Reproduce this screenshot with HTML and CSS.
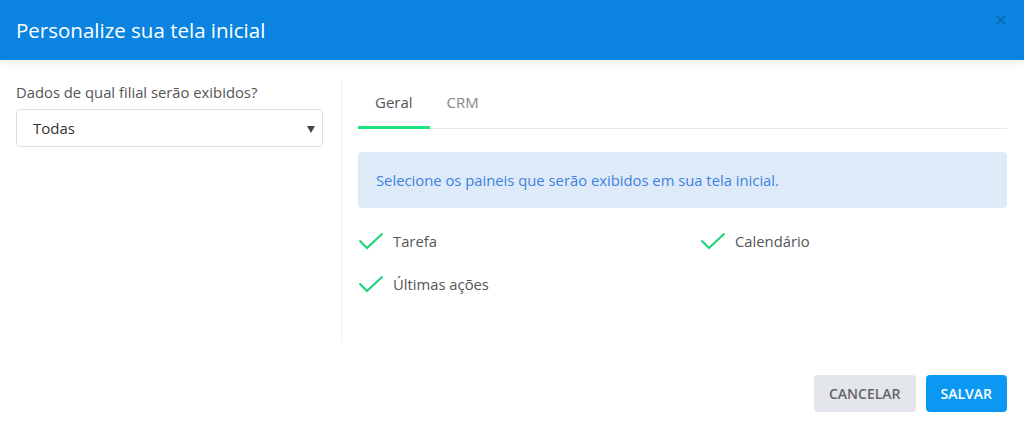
FILE: index.html
```html
<!DOCTYPE html>
<html lang="pt-BR">
<head>
    <meta charset="UTF-8">
    <meta name="viewport" content="width=device-width, initial-scale=1.0">
    <title>Personalize sua tela inicial</title>
    <link rel="stylesheet" href="styles.css">
</head>
<body>
    <div class="modal">
        <div class="modal-header">
            <h1>Personalize sua tela inicial</h1>
            <button class="close" aria-label="Fechar">
                <svg width="10" height="10" viewBox="0 0 10 10"><path d="M1 1L9 9M9 1L1 9" stroke="currentColor" stroke-width="1.6"/></svg>
            </button>
        </div>

        <div class="modal-body">
            <div class="col-left">
                <label for="filial">Dados de qual filial serão exibidos?</label>
                <div class="select">
                    <span>Todas</span>
                    <i class="caret"></i>
                </div>
            </div>

            <div class="col-right">
                <ul class="tabs">
                    <li class="tab active">Geral</li>
                    <li class="tab">CRM</li>
                </ul>

                <div class="info">Selecione os paineis que serão exibidos em sua tela inicial.</div>

                <div class="panels">
                    <div class="panel-item">
                        <svg class="check" width="26" height="18" viewBox="0 0 26 18"><path d="M1.5 8.5L9 16L24.5 1.5" fill="none" stroke="currentColor" stroke-width="2.2"/></svg>
                        <span>Tarefa</span>
                    </div>
                    <div class="panel-item">
                        <svg class="check" width="26" height="18" viewBox="0 0 26 18"><path d="M1.5 8.5L9 16L24.5 1.5" fill="none" stroke="currentColor" stroke-width="2.2"/></svg>
                        <span>Calendário</span>
                    </div>
                    <div class="panel-item">
                        <svg class="check" width="26" height="18" viewBox="0 0 26 18"><path d="M1.5 8.5L9 16L24.5 1.5" fill="none" stroke="currentColor" stroke-width="2.2"/></svg>
                        <span>Últimas ações</span>
                    </div>
                </div>
            </div>
        </div>

        <div class="modal-footer">
            <button class="btn btn-cancel">CANCELAR</button>
            <button class="btn btn-save">SALVAR</button>
        </div>
    </div>
</body>
</html>
```

FILE: styles.css
```css
body {
    font-family: 'Open Sans', sans-serif;
    background-color: #fff;
    margin: 0;
    color: #555;
}
.modal {
    width: 1024px;
    height: 429px;
    background-color: #fff;
}
.modal-header {
    height: 60px;
    background-color: #0a84e0;
    display: flex;
    align-items: center;
    justify-content: space-between;
    padding: 0 18px 0 16px;
    box-shadow: 0 3px 10px rgba(0, 0, 0, 0.08);
    position: relative;
}
.modal-header h1 {
    margin: 0 0 1px;
    font-size: 20.5px;
    font-weight: 400;
    color: #fff;
}
.close {
    background: none;
    border: none;
    padding: 0;
    margin-top: -20px;
    color: rgba(0, 0, 0, 0.22);
    cursor: pointer;
}
.modal-body {
    display: flex;
    margin-top: 20px;
    padding: 0 17px 0 16px;
    height: 261px;
}
.col-left {
    width: 307px;
    padding-right: 18px;
    border-right: 1px solid #efefef;
}
.col-left label {
    display: block;
    font-size: 14.8px;
    line-height: 22px;
    margin-top: 1px;
    color: #555;
}
.select {
    margin-top: 6px;
    height: 38px;
    box-sizing: border-box;
    border: 1px solid #d6e0ea;
    border-radius: 4px;
    display: flex;
    align-items: center;
    justify-content: space-between;
    padding: 0 7px 0 16px;
    font-size: 15px;
    color: #333;
}
.caret {
    width: 0;
    height: 0;
    border-left: 4px solid transparent;
    border-right: 4px solid transparent;
    border-top: 7px solid #444;
    margin-top: 2px;
}
.col-right {
    flex: 1;
    padding-left: 16px;
}
.tabs {
    list-style: none;
    margin: 0;
    padding: 0;
    display: flex;
    border-bottom: 1px solid #e6e8ec;
}
.tab {
    padding: 11px 17px 13px;
    font-size: 15px;
    line-height: 22px;
    color: #888;
    border-bottom: 3px solid transparent;
    margin-bottom: -1px;
    cursor: pointer;
}
.tab.active {
    color: #555;
    border-bottom-color: #1de481;
}
.info {
    margin-top: 23px;
    height: 56px;
    display: flex;
    align-items: center;
    padding: 0 18px;
    background-color: #dfeaf8;
    border-radius: 4px;
    font-size: 14.8px;
    color: #3d82e1;
}
.panels {
    display: grid;
    grid-template-columns: 342px 1fr;
    row-gap: 22px;
    margin-top: 23px;
}
.panel-item {
    display: flex;
    align-items: center;
    gap: 9px;
    font-size: 14.8px;
    line-height: 21px;
    color: #555;
}
.check {
    color: #22d37b;
    margin-top: -1px;
}
.modal-footer {
    display: flex;
    justify-content: flex-end;
    gap: 10px;
    padding: 34px 17px 0;
}
.btn {
    height: 37px;
    border: none;
    border-radius: 4px;
    font-family: 'Open Sans', sans-serif;
    font-size: 14px;
    font-weight: 600;
    padding: 0 15px;
    cursor: pointer;
}
.btn-cancel {
    background-color: #e3e6eb;
    color: #666;
}
.btn-save {
    background-color: #0b98f2;
    color: #fff;
}
```
